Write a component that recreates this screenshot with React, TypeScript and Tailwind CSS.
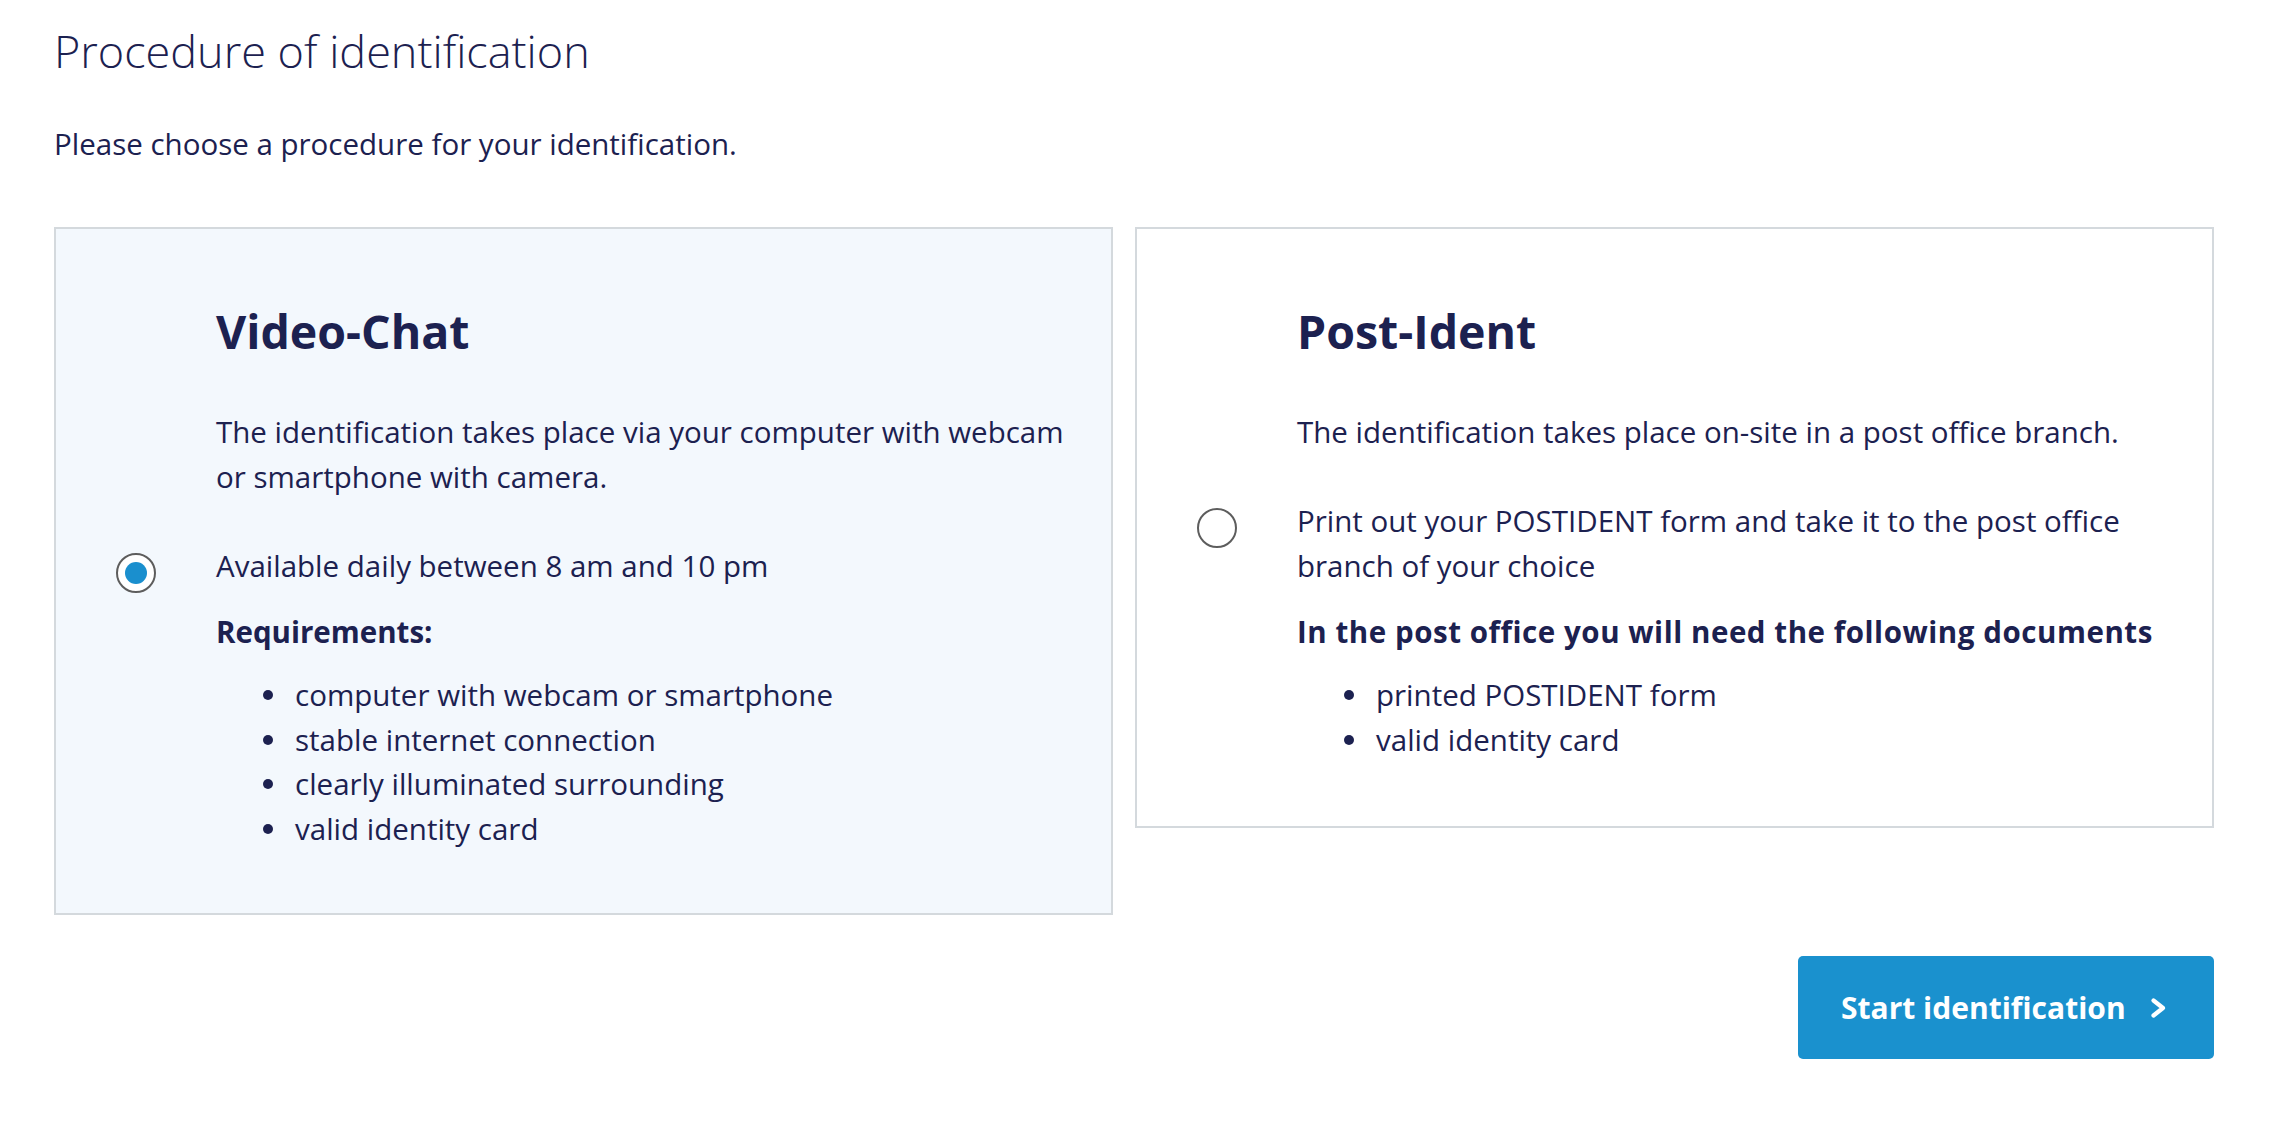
import React from 'react';

function Radio({ checked }: { checked?: boolean }) {
  return (
    <div className="mt-[10px] flex h-[40px] w-[40px] items-center justify-center rounded-full border-2 border-[#5d5d5d] bg-white">
      {checked && <div className="h-[22px] w-[22px] rounded-full bg-[#1a8fce]" />}
    </div>
  );
}

function Row({ radio, className = '', children }: { radio?: React.ReactNode; className?: string; children: React.ReactNode }) {
  return (
    <div className={`flex ${className}`}>
      <div className="w-[100px] shrink-0">{radio}</div>
      <div className="min-w-0 flex-1">{children}</div>
    </div>
  );
}

function Bullets({ items }: { items: string[] }) {
  return (
    <ul className="mt-[19px] leading-[44.5px]">
      {items.map((item) => (
        <li key={item} className="flex items-center">
          <span className="ml-[47px] h-[10px] w-[10px] shrink-0 rounded-full bg-[#1c2150]" />
          <span className="ml-[22px]">{item}</span>
        </li>
      ))}
    </ul>
  );
}

export default function App() {
  return (
    <div className="min-h-screen bg-white px-[54px] pt-[21px] font-['Open_Sans',sans-serif] text-[29.5px] leading-[45px] text-[#1c2150]">
      <h1 className="text-[45px] leading-[60px] font-light">Procedure of identification</h1>
      <p className="mt-[40px]">Please choose a procedure for your identification.</p>

      <div className="mt-[61px] flex items-start gap-[22px]">
        {/* Video chat */}
        <div className="w-[1059px] border-2 border-[#d4d9dd] bg-[#f3f8fd] pt-[72px] pb-[62px] pl-[60px]">
          <Row>
            <h2 className="text-[46.5px] leading-[60px] font-bold">Video-Chat</h2>
          </Row>
          <Row className="mt-[48px]">
            <p className="max-w-[870px]">The identification takes place via your computer with webcam or smartphone with camera.</p>
          </Row>
          <Row className="mt-[44px]" radio={<Radio checked />}>
            <p>Available daily between 8 am and 10 pm</p>
            <p className="mt-[21px] font-bold">Requirements:</p>
            <Bullets
              items={[
                'computer with webcam or smartphone',
                'stable internet connection',
                'clearly illuminated surrounding',
                'valid identity card',
              ]}
            />
          </Row>
        </div>

        {/* Post ident */}
        <div className="w-[1079px] border-2 border-[#d4d9dd] bg-white pt-[72px] pb-[64px] pl-[60px]">
          <Row>
            <h2 className="text-[46.5px] leading-[60px] font-bold">Post-Ident</h2>
          </Row>
          <Row className="mt-[48px]">
            <p className="max-w-[870px]">The identification takes place on-site in a post office branch.</p>
          </Row>
          <Row className="mt-[44px]" radio={<Radio />}>
            <p className="max-w-[870px]">Print out your POSTIDENT form and take it to the post office branch of your choice</p>
            <p className="mt-[21px] whitespace-nowrap font-bold tracking-[0.55px]">In the post office you will need the following documents</p>
            <Bullets items={['printed POSTIDENT form', 'valid identity card']} />
          </Row>
        </div>
      </div>

      <div className="mt-[41px] flex w-[2160px] justify-end">
        <button className="flex h-[103px] w-[416px] items-center rounded-[5px] bg-[#1a91ce] pl-[43px] text-[30px] leading-[40px] font-bold text-white">
          Start identification
          <svg className="ml-[24px]" width="17" height="20" viewBox="0 0 17 20" fill="none">
            <polyline points="3.5,2.5 13,10 3.5,17.5" stroke="white" strokeWidth="4.2" strokeLinecap="round" strokeLinejoin="round" />
          </svg>
        </button>
      </div>
    </div>
  );
}
